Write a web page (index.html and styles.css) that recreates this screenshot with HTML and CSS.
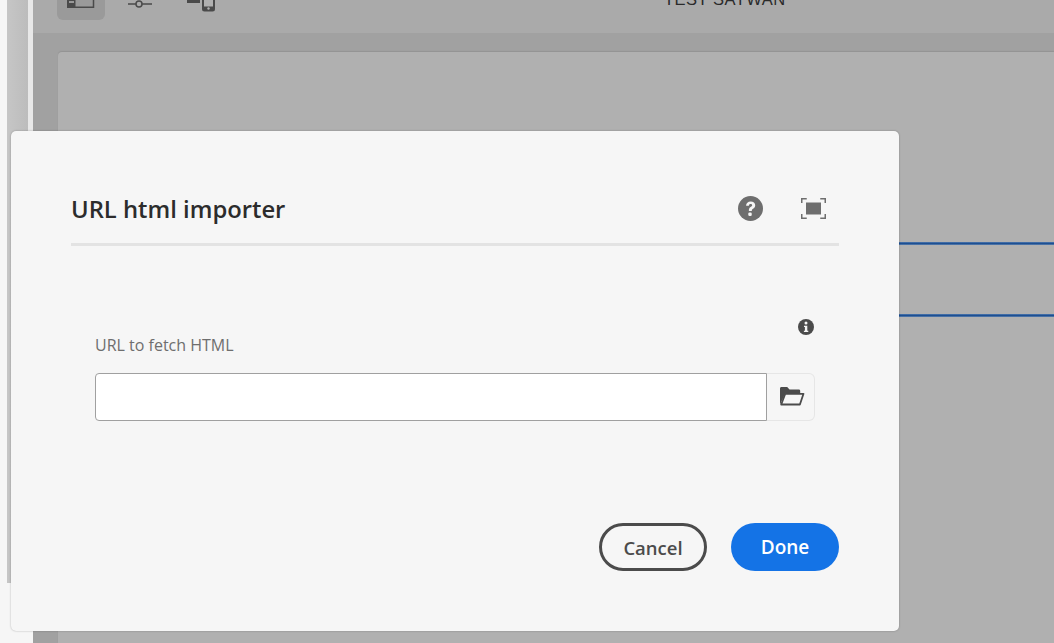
FILE: index.html
```html
<!DOCTYPE html>
<html lang="en">
<head>
<meta charset="utf-8">
<title>URL html importer</title>
<link rel="stylesheet" href="styles.css">
</head>
<body>
<div class="app">
  <div class="edge"></div>
  <div class="rail"></div>
  <div class="rail-line"></div>
  <main class="main">
    <header class="toolbar">
      <div class="tool tool-active">
        <svg width="28" height="24" viewBox="0 0 28 24"><path class="ic-fill" d="M0 8h8.500v16H0z"/><path class="ic-line" d="M8 7.500h18.500v15.750H8"/><path d="M2 18h5" stroke="#b4b4b4" stroke-width="1.500"/></svg>
      </div>
      <div class="tool tool-slider">
        <svg width="26" height="12" viewBox="0 0 26 12"><path class="ic-line" d="M1 6h8M15 6h10"/><circle class="ic-line" cx="12" cy="6" r="3"/></svg>
      </div>
      <div class="tool tool-device">
        <svg width="28" height="19" viewBox="0 0 28 19"><path class="ic-fill" d="M0 6.500h13v3.500H0z"/><rect x="16" y="0" width="11" height="17.500" rx="1.500" fill="#b0b0b0" stroke="#4a4a4a" stroke-width="2"/><path class="ic-fill" d="M16 13.500h11v4H16z"/><circle cx="21.500" cy="15.500" r="1.200" fill="#b0b0b0"/></svg>
      </div>
      <div class="doc-title">TEST SAYWAN</div>
    </header>
    <section class="workspace">
      <div class="card">
        <div class="card-line"></div>
        <div class="card-line"></div>
      </div>
    </section>
  </main>
</div>

<div class="dialog" role="dialog" aria-label="URL html importer">
  <header class="dialog-head">
    <h1 class="dialog-title">URL html importer</h1>
    <div class="dialog-actions">
      <svg class="icon-help" width="25" height="25" viewBox="0 0 26 26"><circle cx="13" cy="13" r="13" fill="#6e6e6e"/><path d="M8.400 10.200c0-2.900 2-4.600 4.800-4.600 2.800 0 4.700 1.600 4.700 4 0 1.900-1.100 2.900-2.300 3.700-.9.600-1.200 1-1.200 1.800v.6h-3.100v-.9c0-1.600.7-2.500 1.800-3.300 1-.7 1.600-1.100 1.600-1.900 0-.9-.7-1.400-1.600-1.400-1.100 0-1.700.7-1.800 2z" fill="#f5f5f5"/><rect x="10.700" y="17.200" width="3.600" height="3.600" rx="1.300" fill="#f5f5f5"/></svg>
      <svg class="icon-full" width="25" height="21" viewBox="0 0 25 21"><path d="M.75 5V.75h5M19.250 .75h5V5M24.250 16v4.250h-5M5.750 20.250h-5V16" fill="none" stroke="#6e6e6e" stroke-width="1.500"/><rect x="5" y="4.500" width="15" height="12" fill="#6e6e6e"/></svg>
    </div>
  </header>
  <div class="field">
    <svg class="icon-info" width="16" height="16" viewBox="0 0 16 16"><circle cx="8" cy="8" r="8" fill="#4b4b4b"/><circle cx="8" cy="4" r="1.500" fill="#f5f5f5"/><path d="M6 6.700h3.300v5h1v1.400H5.900v-1.400h1v-3.600h-.9z" fill="#f5f5f5"/></svg>
    <label class="field-label" for="url">URL to fetch HTML</label>
    <div class="field-row">
      <input class="field-input" id="url" type="text">
      <button class="browse" type="button" aria-label="Browse">
        <svg width="26" height="20" viewBox="0 0 26 20"><path d="M1 18.500V2.500C1 1.700 1.600 1 2.400 1h5.800l2.300 2.600h9.300c.8 0 1.400.6 1.400 1.400v2H6.500z" fill="#4b4b4b"/><path d="M6.300 7.800h18.200l-3.600 10.700H2.200z" fill="none" stroke="#4b4b4b" stroke-width="1.800" stroke-linejoin="round"/></svg>
      </button>
    </div>
  </div>
  <footer class="dialog-foot">
    <button class="btn btn-cancel" type="button">Cancel</button>
    <button class="btn btn-done" type="button">Done</button>
  </footer>
</div>
</body>
</html>
```
FILE: styles.css
```css
* { box-sizing: border-box; }
html, body { margin: 0; height: 100%; overflow: hidden; }
body { font-family: "Open Sans", "Noto Sans", sans-serif; background: #f6f6f6; }

.app { display: flex; height: 643px; }
.edge { width: 7px; background: #f6f6f6; }
.rail { width: 21px; height: 583px; background: linear-gradient(90deg, #c6c6c6, #bcbcbc); }
.rail-line { width: 5px; height: 583px; background: #e8e8e8; }
.main { flex: 1; display: flex; flex-direction: column; min-width: 0; background: #a1a1a1; }

.toolbar { height: 33px; flex: none; background: #aaaaaa; display: flex; align-items: flex-start; padding-left: 24px; overflow: hidden; position: relative; }
.tool { display: flex; justify-content: center; }
.tool-active { width: 48px; height: 20px; background: #9a9a9a; border-radius: 0 0 6px 6px; align-items: flex-end; padding-bottom: 12px; }
.tool-slider { margin-left: 22px; margin-top: -2px; }
.tool-device { margin-left: 34px; margin-top: -7px; }
.ic-fill { fill: #4a4a4a; }
.ic-line { fill: none; stroke: #4a4a4a; stroke-width: 1.500; }
.doc-title { position: absolute; left: 631px; top: -11px; font: 16.5px/20px "Liberation Sans", sans-serif; color: #2a2a2a; letter-spacing: .5px; }

.workspace { flex: 1; padding: 19px 0 0 25px; display: flex; }
.card { flex: 1; display: flex; flex-direction: column; gap: 69px; background: #b0b0b0; border-radius: 4px 0 0 0; padding-top: 190px; box-shadow: 0 -1px 1px #939393; }
.card-line { height: 3px; background: linear-gradient(#5f86b8, #1d4f91 35%, #1d4f91 65%, #6f8fb8); }

.dialog { position: absolute; left: 11px; top: 131px; width: 888px; height: 500px; background: #f6f6f6; border-radius: 5px; padding: 0 60px; box-shadow: 0 0 2px rgba(0,0,0,.3); display: flex; flex-direction: column; }
.dialog-head { height: 115px; flex: none; display: flex; align-items: flex-end; justify-content: space-between; padding-bottom: 18px; border-bottom: 3px solid #e3e3e3; }
.dialog-title { margin: 0; font-size: 23.8px; line-height: 32px; font-weight: 600; color: #2c2c2c; }
.dialog-actions { display: flex; align-items: center; gap: 38px; padding-right: 13px; margin-bottom: 4px; }

.field { position: relative; margin: 88px 24px 0; }
.icon-info { position: absolute; right: 1px; top: -15px; }
.field-label { display: block; font-size: 16px; line-height: 22px; color: #6e6e6e; margin-bottom: 17px; }
.field-row { display: flex; height: 48px; }
.field-input { flex: 1; min-width: 0; border: 1px solid #a0a0a0; border-radius: 4px 0 0 4px; background: #fff; }
.browse { width: 48px; padding: 0 0 2px 2px; border: 1px solid #e6e6e6; border-left: 0; border-radius: 0 6px 6px 0; background: #f6f6f6; display: flex; align-items: center; justify-content: center; }

.dialog-foot { margin-top: auto; margin-bottom: 60px; display: flex; justify-content: flex-end; gap: 24px; }
.btn { height: 48px; border-radius: 24px; font-family: inherit; font-weight: 600; padding: 0; }
.btn-cancel { width: 108px; border: 3px solid #4b4b4b; background: transparent; color: #4b4b4b; font-size: 18.5px; }
.btn-done { width: 108px; border: 0; background: #1473e6; color: #fff; font-size: 19px; }
```
